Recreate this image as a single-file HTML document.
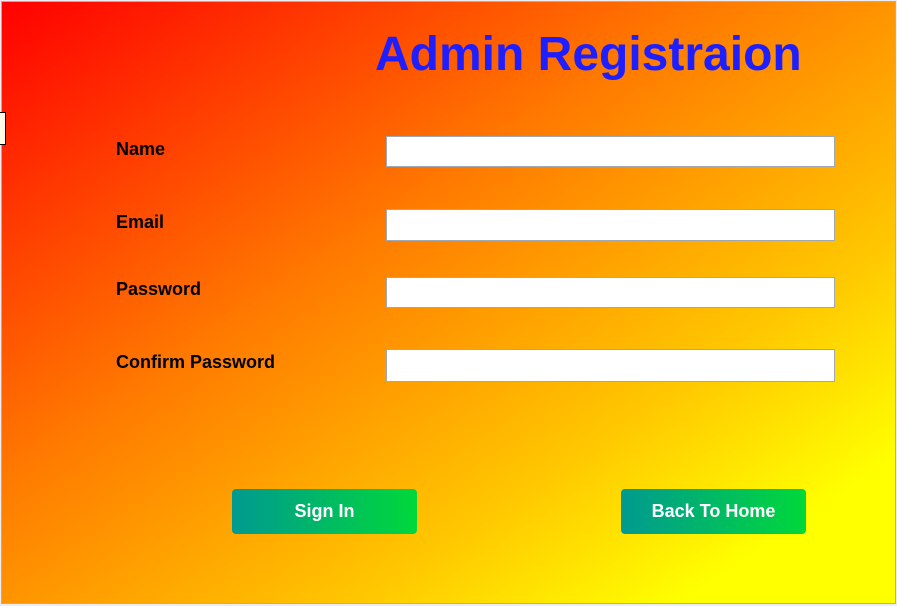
<!DOCTYPE html>
<html><head><meta charset="utf-8"><style>
html,body{margin:0;padding:0;width:897px;height:606px;background:#ececf4;overflow:hidden;font-family:"Liberation Sans",Arial,sans-serif;}
.box{position:absolute;left:1px;top:1px;width:893px;height:601px;border:1px solid #f5a040;
background:linear-gradient(to bottom right,#ff0000 0%,#ff7a00 40%,#ffc800 70%,#ffff00 88%,#ffff00 100%);}
h1{position:absolute;left:375px;top:27px;margin:0;font-size:48px;font-weight:bold;color:#1e1eff;white-space:nowrap;line-height:56px;}
.lbl{position:absolute;left:116px;font-size:18px;font-weight:bold;color:#000;}
.inp{position:absolute;left:386px;width:447px;background:#fff;border:1px solid #a0a8b4;}
.btn{position:absolute;top:489px;width:185px;height:45px;border-radius:4px;background:linear-gradient(to right,#009a90,#00d83a);color:#fff;font-weight:bold;font-size:18px;text-align:center;line-height:45px;}
.sm{position:absolute;left:-2px;top:112px;width:6px;height:31px;background:#fffbe8;border:1px solid #000;}
</style></head><body>
<div class="box"></div>
<div class="sm"></div>
<h1>Admin Registraion</h1>
<div class="lbl" style="top:139px">Name</div>
<div class="lbl" style="top:212px">Email</div>
<div class="lbl" style="top:279px">Password</div>
<div class="lbl" style="top:352px">Confirm Password</div>
<div class="inp" style="top:136px;height:29px"></div>
<div class="inp" style="top:209px;height:30px"></div>
<div class="inp" style="top:277px;height:29px"></div>
<div class="inp" style="top:349px;height:31px"></div>
<div class="btn" style="left:232px">Sign In</div>
<div class="btn" style="left:621px">Back To Home</div>
</body></html>
